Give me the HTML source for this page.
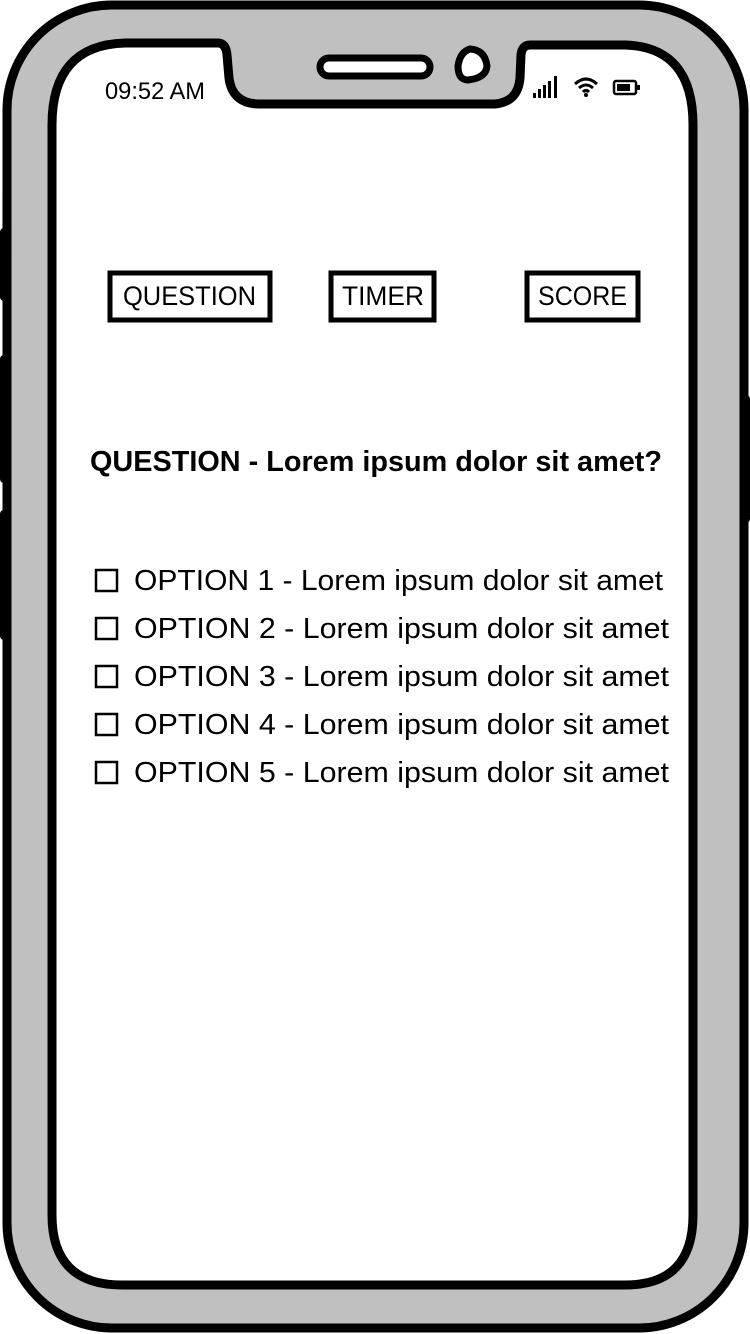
<!DOCTYPE html>
<html><head><meta charset="utf-8"><style>html,body{margin:0;padding:0;background:#fff}svg{display:block}</style></head><body>
<svg width="750" height="1334" viewBox="0 0 750 1334" xmlns="http://www.w3.org/2000/svg" font-family="Liberation Sans, sans-serif">
<rect x="0" y="228" width="12" height="73" rx="4" fill="#000"/>
<rect x="0" y="355" width="12" height="128" rx="4" fill="#000"/>
<rect x="0" y="510" width="12" height="130" rx="4" fill="#000"/>
<rect x="738" y="395" width="12" height="128" rx="4" fill="#000"/>
<rect x="7" y="5" width="737" height="1323" rx="105" fill="#c0c0c0" stroke="#000" stroke-width="9"/>
<path d="M125,43 L218,43 Q226,43 227,55 L229,78 Q232,103 258,104 L495,104 Q518,102 520,78 L521,55 Q522,45 530,45 L625,45 Q693,47 693,125 L693,1215 Q693,1285 625,1285 L122,1285 Q52,1285 52,1215 L52,125 Q52,45 125,43 Z" fill="#fff" stroke="#000" stroke-width="9"/>
<rect x="320" y="58" width="110" height="18" rx="9" fill="#fff" stroke="#000" stroke-width="7"/>
<path d="M470,49 Q460,52 458,66 Q458,80 468,80 Q486,78 487,66 Q485,50 470,49 Z" fill="#fff" stroke="#000" stroke-width="7"/>
<text x="105" y="99" font-size="24" fill="#000" textLength="100" lengthAdjust="spacingAndGlyphs">09:52 AM</text>
<g fill="#000"><rect x="533" y="93" width="3" height="5"/><rect x="538" y="89" width="3" height="9"/><rect x="543" y="85" width="3" height="13"/><rect x="548" y="81" width="3" height="17"/><rect x="554" y="76" width="3" height="22"/></g>
<path d="M575,84 Q586,74 597,84 M579,88 Q586,82 593,88 M583,92 Q586,89 589,92" fill="none" stroke="#000" stroke-width="3"/>
<circle cx="586" cy="95" r="2" fill="#000"/>
<rect x="614" y="81" width="22" height="13" rx="2" fill="none" stroke="#000" stroke-width="2.5"/>
<rect x="617" y="84" width="13" height="7" fill="#000"/><rect x="637" y="85" width="3" height="5" fill="#000"/>
<g fill="#fff" stroke="#000" stroke-width="5">
<rect x="110" y="273" width="160" height="47"/>
<rect x="331" y="273" width="103" height="47"/>
<rect x="527" y="273" width="111" height="47"/>
</g>
<g font-size="27" fill="#000">
<text x="123" y="305" textLength="133" lengthAdjust="spacingAndGlyphs">QUESTION</text>
<text x="342" y="305" textLength="82" lengthAdjust="spacingAndGlyphs">TIMER</text>
<text x="538" y="305" textLength="89" lengthAdjust="spacingAndGlyphs">SCORE</text>
</g>
<text x="90" y="471" font-size="29" font-weight="bold" textLength="572" lengthAdjust="spacingAndGlyphs">QUESTION - Lorem ipsum dolor sit amet?</text>
<g fill="none" stroke="#000" stroke-width="2.5">
<rect x="96" y="570" width="21" height="21"/>
<rect x="96" y="618" width="21" height="21"/>
<rect x="96" y="666" width="21" height="21"/>
<rect x="96" y="714" width="21" height="21"/>
<rect x="96" y="762" width="21" height="21"/>
</g>
<g font-size="29" fill="#000">
<text x="134" y="590" textLength="529" lengthAdjust="spacingAndGlyphs">OPTION 1 - Lorem ipsum dolor sit amet</text>
<text x="134" y="638" textLength="535" lengthAdjust="spacingAndGlyphs">OPTION 2 - Lorem ipsum dolor sit amet</text>
<text x="134" y="686" textLength="535" lengthAdjust="spacingAndGlyphs">OPTION 3 - Lorem ipsum dolor sit amet</text>
<text x="134" y="734" textLength="535" lengthAdjust="spacingAndGlyphs">OPTION 4 - Lorem ipsum dolor sit amet</text>
<text x="134" y="782" textLength="535" lengthAdjust="spacingAndGlyphs">OPTION 5 - Lorem ipsum dolor sit amet</text>
</g>
</svg>
</body></html>
